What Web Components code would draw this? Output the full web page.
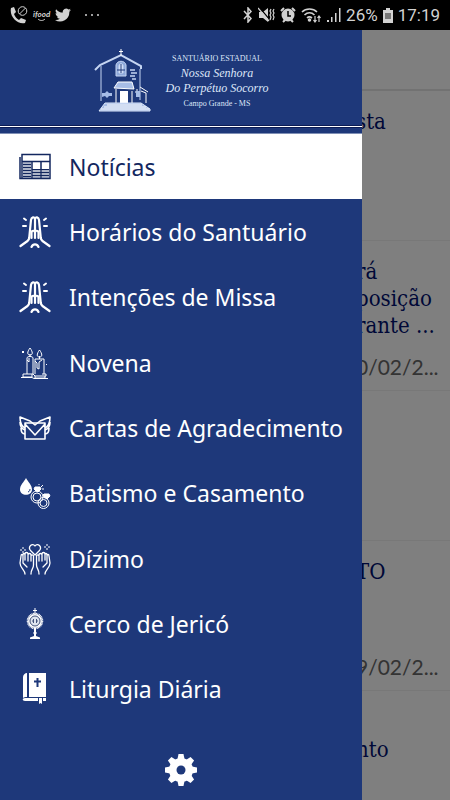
<!DOCTYPE html>
<html lang="pt-BR">
<head>
<meta charset="utf-8">
<meta name="viewport" content="width=device-width, initial-scale=1">
<title>Santuário Estadual</title>
<style>
  body {
    margin: 0;
    --color-primary: #1e387a;
    --color-title: #001070;
    --font-menu: "Noto Sans", "Open Sans", sans-serif;
  }
</style>
</head>
<body>
<app-shell>
  <status-bar slot="status"></status-bar>

  <news-feed slot="page">
    <news-card><span>sta</span></news-card>
    <news-card date="0/02/2..."><span>rá</span><span>posição</span><span>rante ...</span></news-card>
    <news-card></news-card>
    <news-card date="9/02/2..."><span>TO</span></news-card>
    <news-card second><span>nto</span></news-card>
  </news-feed>

  <side-drawer slot="drawer">
    <brand-header slot="header"></brand-header>
    <menu-item icon="news" active>Notícias</menu-item>
    <menu-item icon="pray">Horários do Santuário</menu-item>
    <menu-item icon="pray">Intenções de Missa</menu-item>
    <menu-item icon="candles">Novena</menu-item>
    <menu-item icon="letter">Cartas de Agradecimento</menu-item>
    <menu-item icon="rings">Batismo e Casamento</menu-item>
    <menu-item icon="hands">Dízimo</menu-item>
    <menu-item icon="monstrance">Cerco de Jericó</menu-item>
    <menu-item icon="bible">Liturgia Diária</menu-item>
  </side-drawer>
</app-shell>

<script>
const icons = {
  news: `
    <g fill="none" stroke="currentColor" stroke-width="1.500">
      <path d="M3 3.500h28v24H3zM3 10.500h28M13 10v17M22 10v17M1 6v21.500h3"/>
      <path stroke-width="1" d="M4 13.500h8M4 16.500h8M4 19.500h8M4 22.500h8M4 25.500h8M13 18.500h17M13 21.500h17M13 24.500h17"/>
    </g>
    <path fill="currentColor" d="M4 11h8v16H4zM14 18h7v9h-7zM23 18h7v9h-7z" opacity=".35"/>`,
  pray: `
    <g fill="none" stroke="currentColor" stroke-width="2.200" stroke-linecap="round" stroke-linejoin="round">
      <path d="M1.500 30l7-5c1-.7 1.500-1.500 1.700-3L12 4c.4-3 3.500-3.500 4-1 .5-2.500 3.600-2 4 1l1.800 18c.2 1.500.7 2.300 1.700 3l7 5"/>
      <path d="M16 3v19M12.500 22v-5c0-3 3.500-3 3.500 0M19.500 22v-5c0-3-3.500-3-3.500 0M12.500 31c1.500-3.500 5.500-3.500 7 0"/>
      <path stroke-width="2" d="M5 2.500L7 4M4 10h3M27 2.500L25 4M28 10h-3"/>
    </g>`,
  candles: `
    <g fill="none" stroke="currentColor" stroke-width="1" stroke-linejoin="round">
      <path d="M8 27V11c0-2 6-2 6 0v16M16 27V12h9v15M8 13l2 2v-4M16 14l2 2v5l2 1v-7l3-2M11 10V7M20.500 12V9"/>
      <path d="M11 1c-3 4-3 7 0 7s3-3 0-7zM20.500 3c-3 4-3 7 0 7s3-3 0-7z"/>
      <path d="M4 27h10l2 2h11v-2h-4M2 30.500h11l2 1h14M4 27v3h9v-3M16 29v2h10v-2"/>
    </g>
    <path fill="currentColor" d="M3 4h2v2H3zM27 17h1v1h-1z"/>`,
  letter: `
    <g fill="none" stroke="currentColor" stroke-width="1.600" stroke-linejoin="round">
      <path d="M6 11h20v16H6zM6 12l10 11 10-11"/>
      <path d="M6 16C2 14 1 10 1 5l10 4 5 4 5-4 10-4c0 5-1 9-5 11M1 10c0 4 2 7 5 8M31 10c0 4-2 7-5 8M2 16c0 4 2 6 4 6M30 16c0 4-2 6-4 6"/>
    </g>`,
  rings: `
    <path fill="currentColor" d="M7 1C5 5 1 8 1 12.500c0 7 12 7 12 0C13 8 9 5 7 1z"/>
    <path fill="none" stroke="#1e387a" d="M9 15c1.500-.5 2-1.500 2-3"/>
    <g fill="none" stroke="currentColor" stroke-width="1">
      <circle cx="18" cy="20" r="6"/><circle cx="18" cy="20" r="4"/>
      <circle cx="24.500" cy="26" r="5.500"/><circle cx="24.500" cy="26" r="3.500"/>
      <path fill="currentColor" d="M17 14l-2-2 1-2h5l1 2-3 3zM25 20l-1-2 1-1h5l1 2-3 3z"/>
      <path d="M22 10l2-2M20 8V7M23 12h2"/>
    </g>`,
  hands: `
    <g fill="none" stroke="currentColor" stroke-width="1.300" stroke-linecap="round" stroke-linejoin="round">
      <path d="M16 12l-4-4c-4-4 1.500-9 4-5 2.500-4 8 1 4 5z"/>
      <path d="M6 31c0-4-5-6-5-11l1-7c0-2 2-2 2 0v7l4 4M4 18v-6c0-2 2-2 2 0v5M6 13v-2c0-2 3-2 3 0v7M9 12c0-2 3-2 3 0v6M12 13c0-1.500 2.500-1.500 2.500 0v9c0 4-2.500 4-2.500 9"/>
      <path d="M26 31c0-4 5-6 5-11l-1-7c0-2-2-2-2 0v7l-4 4M28 18v-6c0-2-2-2-2 0v5M26 13v-2c0-2-3-2-3 0v7M23 12c0-2-3-2-3 0v6M20 13c0-1.500-2.500-1.500-2.500 0v9c0 4 2.500 4 2.500 9"/>
    </g>
    <path stroke="currentColor" stroke-width="1" d="M4 4v2M4 8v2M1 7h2M5 7h2M28 1v2M28 5v2M25 4h2M29 4h2"/>`,
  monstrance: `
    <circle cx="16" cy="13" r="7.500" fill="none" stroke="currentColor" stroke-width="1.500" stroke-dasharray="1 .5"/>
    <circle cx="16" cy="13" r="7" fill="currentColor"/>
    <circle cx="16" cy="13" r="5" fill="#dfe5ef" stroke="#44547c"/>
    <path stroke="#44547c" stroke-width="1" d="M14.500 11v4M17.500 11v4M13 13h2M17 13h2"/>
    <path fill="currentColor" d="M15.500 0h1v2H18v1h-1.500v3h-1V3H14V2h1.500zM15 20h2v4l1 1-1 1v2l4 1.500V31H11v-1.500l4-1.500v-2l-1-1 1-1z"/>`,
  bible: `
    <path fill="currentColor" d="M10 0h17v24H10zM8 0v24c-2 0-3 0-4 1V4c0-2 2-4 4-4zM6 25h13v3H6c-3 0-3-3 0-3zM20 25h3v6l-1.500-1-1.500 1zM24 25h3v3h-3z"/>
    <path fill="#1e387a" d="M17.500 5h2v2.500H22v2h-2.500V14h-2V9.500H15v-2h2.500z"/>`,
  gear: `
    <g fill="currentColor">
      ${[0, 45, 90, 135].map(a => `<path transform="rotate(${a} 16 16)" d="M13.500 0h5l1 5v22l-1 5h-5l-1-5V5z"/>`).join('')}
      <circle cx="16" cy="16" r="12"/>
    </g>
    <circle cx="16" cy="16" r="4.500" fill="#1e387a"/>`
};

class AppShell extends HTMLElement {
  constructor() {
    super();
    this.attachShadow({ mode: 'open' });
    this.shadowRoot.innerHTML = `
      <style>
        :host {
          display: grid;
          grid-template-rows: 30px 1fr;
          height: 100vh;
          min-height: 640px;
          overflow: hidden;
          background: #fff;
        }

        .stage {
          position: relative;
          min-height: 0;
          overflow: hidden;
        }

        .scrim {
          position: absolute;
          inset: 0;
          background: rgba(0, 0, 0, 0.5);
        }

        ::slotted([slot="drawer"]) {
          position: absolute;
          inset: 0 auto 0 0;
        }
      </style>
      <slot name="status"></slot>
      <div class="stage">
        <slot name="page"></slot>
        <div class="scrim"></div>
        <slot name="drawer"></slot>
      </div>
    `;
  }
}

class StatusBar extends HTMLElement {
  constructor() {
    super();
    this.attachShadow({ mode: 'open' });
    this.shadowRoot.innerHTML = `
      <style>
        :host {
          display: flex;
          justify-content: space-between;
          align-items: center;
          padding: 0 10px;
          background: #000;
          color: #d2d2d2;
          font: 17px/30px Roboto, sans-serif;
        }

        div {
          display: flex;
          align-items: center;
          gap: 5px;
        }

        .food {
          display: grid;
          justify-items: center;
          font: italic bold 8px/8px Lato, sans-serif;
        }

        svg {
          display: block;
        }
      </style>
      <div class="left">
        <svg width="18" height="18" viewBox="0 0 18 18">
          <path fill="currentColor" d="M1 2l3-1 2 5-2 2c1 3 3 5 5 6l2-2 5 2-1 3C8 19-1 11 1 2z"/>
          <circle cx="12.500" cy="5" r="4.300" fill="none" stroke="currentColor"/>
          <path stroke="currentColor" d="M9.500 8l6-6"/>
        </svg>
        <span class="food">ifood
          <svg width="8" height="3" viewBox="0 0 8 3" fill="none" stroke="currentColor"><path d="M0 1c2 2 5 2 7 0"/></svg>
        </span>
        <svg width="16" height="14" viewBox="0 2 24 20" fill="currentColor">
          <path d="M24 4.600a10 10 0 0 1-2.800.8 5 5 0 0 0 2.100-2.700 10 10 0 0 1-3.100 1.200 4.900 4.900 0 0 0-8.400 4.500A14 14 0 0 1 1.700 3.200a4.900 4.900 0 0 0 1.500 6.500 5 5 0 0 1-2.200-.6 4.900 4.900 0 0 0 4 4.900 5 5 0 0 1-2.300.1 4.900 4.900 0 0 0 4.600 3.400A10 10 0 0 1 0 19.500 14 14 0 0 0 21.500 7z"/>
        </svg>
        <svg width="28" height="14" viewBox="0 0 28 14" fill="currentColor">
          <circle cx="10" cy="7" r="1"/><circle cx="16" cy="7" r="1"/><circle cx="22" cy="7" r="1"/>
        </svg>
      </div>
      <div>
        <svg width="10" height="16" viewBox="0 0 10 16" fill="none" stroke="currentColor" stroke-width="1.500">
          <path d="M1 4l7 7.500L5 15V1l3 3.500L1 12"/>
        </svg>
        <svg width="17" height="16" viewBox="0 0 17 16" fill="none" stroke="currentColor" stroke-width="1.200">
          <path fill="currentColor" stroke="none" d="M1 5h4l5-4v14l-5-4H1z"/>
          <path stroke="#000" d="M1 0l11 13"/><path d="M0 1l11 13M13 2l-1 2 1 2-1 2 1 2-1 3M16 2l-1 2 1 2-1 2 1 2-1 3"/>
        </svg>
        <svg width="16" height="16" viewBox="0 0 16 16" stroke-width="2">
          <path stroke="currentColor" d="M1 4l3-3M15 4l-3-3M3 15l2-2M13 15l-2-2"/>
          <circle cx="8" cy="8" r="6.500" fill="currentColor"/>
          <path fill="none" stroke="#000" stroke-width="1.500" d="M8 4v5h3"/>
        </svg>
        <svg width="21" height="16" viewBox="0 0 21 16" fill="none" stroke="currentColor" stroke-width="1.600">
          <path d="M1 5c4-4 11-4 15 0M3.500 8c3-3 7-3 10 0M6 11c1.500-1.500 3-1.500 5 0"/>
          <circle cx="8.500" cy="13" r="1" fill="currentColor"/>
          <path stroke-width="1.200" d="M14 9v6M12.500 13l1.500 2 1.500-2M18 15V9M16.500 11L18 9l1.500 2"/>
        </svg>
        <svg width="14" height="16" viewBox="0 0 14 16" fill="currentColor">
          <path d="M0 13h2v2H0zM4 10h1.500v5H4zM8 6h1.500v9H8zM12 1h1.500v14H12z"/>
        </svg>
        <span>26%</span>
        <svg width="10" height="15" viewBox="0 0 10 15">
          <path fill="currentColor" d="M3 0h4v2h3v13H0V2h3z"/><path fill="#777" d="M2 5h6v6H2z"/>
        </svg>
        <span>17:19</span>
      </div>
    `;
  }
}

class NewsFeed extends HTMLElement {
  constructor() {
    super();
    this.attachShadow({ mode: 'open' });
    this.shadowRoot.innerHTML = `
      <style>
        :host {
          display: block;
        }

        header {
          box-sizing: border-box;
          height: 61px;
          border-bottom: 2px solid #e4e4e4;
        }
      </style>
      <header></header>
      <slot></slot>
    `;
  }
}

class NewsCard extends HTMLElement {
  constructor() {
    super();
    this.attachShadow({ mode: 'open' });
    this.shadowRoot.innerHTML = `
      <style>
        :host {
          display: flex;
          flex-direction: column;
          justify-content: space-between;
          box-sizing: border-box;
          height: 150px;
          padding: 17px 0 10px 356px;
          border-bottom: 1px solid #f0f0f0;
          white-space: nowrap;
        }

        :host([second]) {
          padding-top: 45px;
        }

        h2 {
          display: flex;
          flex-direction: column;
          margin: 0;
          color: var(--color-title);
          font: 22px/27px "DejaVu Serif Condensed", "DejaVu Serif", serif;
        }

        time {
          color: #666;
          font: 21px/27px Lato, sans-serif;
        }
      </style>
      <h2><slot></slot></h2>
      <time>${this.getAttribute('date') || ''}</time>
    `;
  }
}

class SideDrawer extends HTMLElement {
  constructor() {
    super();
    this.attachShadow({ mode: 'open' });
    this.shadowRoot.innerHTML = `
      <style>
        :host {
          display: flex;
          flex-direction: column;
          width: 362px;
          max-width: 85vw;
          background: var(--color-primary);
          color: #fff;
        }

        nav {
          display: grid;
          grid-template-columns: minmax(0, 1fr);
          grid-auto-rows: 1fr;
          flex: 1;
        }

        footer {
          display: flex;
          justify-content: center;
          align-items: flex-end;
          box-sizing: border-box;
          height: 78px;
          padding-bottom: 14px;
        }

        button {
          padding: 0;
          border: 0;
          background: none;
          color: inherit;
        }

        svg {
          display: block;
        }
      </style>
      <slot name="header"></slot>
      <nav><slot></slot></nav>
      <footer>
        <button type="button" aria-label="Configurações">
          <svg width="32" height="32" viewBox="0 0 32 32">${icons.gear}</svg>
        </button>
      </footer>
    `;
  }
}

class BrandHeader extends HTMLElement {
  constructor() {
    super();
    this.attachShadow({ mode: 'open' });
    this.shadowRoot.innerHTML = `
      <style>
        :host {
          display: block;
          height: 103px;
          border-bottom: 1px solid #7f8fb5;
        }

        .brand {
          display: flex;
          justify-content: center;
          align-items: center;
          gap: 12px;
          box-sizing: border-box;
          height: 96px;
          padding-top: 6px;
          border-bottom: 1px solid #0c1c55;
        }

        .rule {
          height: 1px;
          background: #fff;
          border-bottom: 1px solid #0c1c55;
        }

        .names {
          display: flex;
          flex-direction: column;
          align-items: center;
          color: #dde6f8;
          font: 8px/15px "Liberation Serif", serif;
          white-space: nowrap;
        }

        .script {
          font-size: 12px;
          font-style: italic;
        }
      </style>
      <div class="brand">
        <svg width="60" height="64" viewBox="0 0 60 64" fill="none" stroke="#c5d5f2">
          <path stroke-width="2" d="M1 21l5-5 21-10 20 11v3"/>
          <path stroke="#fff" d="M27 0v7M25 2.500h4"/>
          <path d="M7 17v35M46 20v31"/>
          <path fill="#8fa9da" d="M22 16c1-5 9-5 10 0v11H22z"/>
          <path fill="#dfe9fb" d="M25 17c0-3 4-3 4 0v7h-4z"/>
          <path stroke="#1e387a" d="M27 15v9M23 21h8"/>
          <path stroke-width="1.500" d="M36 21h5M37 24h6M36 27h5M38 30h4"/>
          <path fill="#a7bde6" stroke="#fff" d="M20 39l4-6h14l2 7z"/>
          <path stroke="#fff" d="M22 40v15M38 42v13"/>
          <path fill="#fff" stroke="none" d="M26 42h8v13h-8z"/>
          <path stroke="#fff" d="M46 38l8 5M47 42l5 2v10M41 43h5M43 40v8"/>
          <path fill="#a7bde6" stroke="none" d="M13 42l2 2h3v3h-3l-2 2-2-2-3 1v-4h3zM42 42h4v6h-4z"/>
          <path fill="#a7bde6" stroke="#dfe9fb" d="M5 62l6-8h36l9 6v2z"/>
          <path stroke="#fff" d="M13 56h35M10 58h42M7 60h48"/>
        </svg>
        <div class="names">
          <span>SANTUÁRIO ESTADUAL</span>
          <span class="script">Nossa Senhora</span>
          <span class="script">Do Perpétuo Socorro</span>
          <span>Campo Grande - MS</span>
        </div>
      </div>
      <div class="rule"></div>
    `;
  }
}

class MenuItem extends HTMLElement {
  constructor() {
    super();
    this.attachShadow({ mode: 'open' });
    this.shadowRoot.innerHTML = `
      <style>
        :host {
          display: grid;
        }

        a {
          display: flex;
          align-items: center;
          gap: 18px;
          padding: 0 19px;
          color: #fff;
          font: 23px/32px var(--font-menu);
          text-decoration: none;
          white-space: nowrap;
        }

        :host([active]) a {
          background: #fff;
          color: #13275f;
        }

        svg {
          flex: none;
        }
      </style>
      <a href="#"><svg width="32" height="32" viewBox="0 0 32 32" aria-hidden="true">${icons[this.getAttribute('icon')]}</svg><slot></slot></a>
    `;
  }
}

customElements.define('app-shell', AppShell);
customElements.define('status-bar', StatusBar);
customElements.define('news-feed', NewsFeed);
customElements.define('news-card', NewsCard);
customElements.define('side-drawer', SideDrawer);
customElements.define('brand-header', BrandHeader);
customElements.define('menu-item', MenuItem);
</script>
</body>
</html>
